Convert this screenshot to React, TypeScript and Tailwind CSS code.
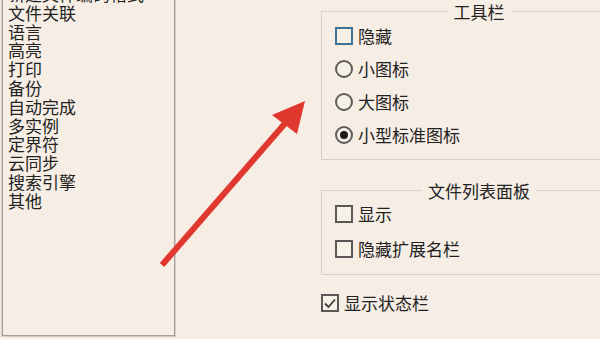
import React from "react";

const font = { fontFamily: '"Noto Sans CJK SC", "Noto Sans", sans-serif' };

const categories = [
  "新建文件编码格式",
  "文件关联",
  "语言",
  "高亮",
  "打印",
  "备份",
  "自动完成",
  "多实例",
  "定界符",
  "云同步",
  "搜索引擎",
  "其他",
];

function CheckBox({ checked = false, focused = false }: { checked?: boolean; focused?: boolean }) {
  return (
    <span
      className={`flex h-[18px] w-[18px] shrink-0 items-center justify-center border-2 ${
        focused ? "border-[#3f7197]" : "border-[#5a5856]"
      } bg-[#f7f0e7]`}
    >
      {checked && (
        <svg width="14" height="14" viewBox="0 0 14 14">
          <path d="M2 7.5 L5.5 11 L12 3.5" fill="none" stroke="#3c3a38" strokeWidth="1.8" />
        </svg>
      )}
    </span>
  );
}

function Radio({ checked = false }: { checked?: boolean }) {
  return (
    <span className="flex h-[18px] w-[18px] shrink-0 items-center justify-center rounded-full border-2 border-[#5e5c5a] bg-[#f7f0e7]">
      {checked && <span className="h-[8px] w-[8px] rounded-full bg-[#1e1c1a]" />}
    </span>
  );
}

function Row({ control, label }: { control: React.ReactNode; label: string }) {
  return (
    <div className="flex h-[24px] items-center gap-[5px]">
      {control}
      <span className="leading-[24px]">{label}</span>
    </div>
  );
}

function Group({ title, children, className = "" }: { title: string; children: React.ReactNode; className?: string }) {
  return (
    <fieldset className={`w-[316px] border border-[#d6d0c7] px-[13px] ${className}`}>
      <legend className="mx-auto px-[6px] leading-[23px]">{title}</legend>
      {children}
    </fieldset>
  );
}

export default function App() {
  return (
    <div
      className="relative flex h-[339px] w-[600px] overflow-hidden bg-[#f6eee5] text-[17px] text-[#222]"
      style={font}
    >
      {/* category list (scrolled, top cut off) */}
      <div className="ml-[1px] mt-[-4px] h-[341px] w-[175px] shrink-0 border border-[#d3cec6]">
        <div className="h-full w-full overflow-hidden border border-[#a3a09b] pl-[5px]">
          <ul className="mt-[-13px] leading-[18.8px]">
            {categories.map((c) => (
              <li key={c} className="whitespace-nowrap">
                {c}
              </li>
            ))}
          </ul>
        </div>
      </div>

      {/* settings */}
      <div className="ml-[145px] flex shrink-0 flex-col">
        <Group title="工具栏" className="pb-[12px]">
          <div className="flex flex-col gap-[9px] pt-[0.5px]">
            <Row control={<CheckBox focused />} label="隐藏" />
            <Row control={<Radio />} label="小图标" />
            <Row control={<Radio />} label="大图标" />
            <Row control={<Radio checked />} label="小型标准图标" />
          </div>
        </Group>
        <Group title="文件列表面板" className="mt-[19.5px] pb-[13px]">
          <div className="flex flex-col gap-[10.5px]">
            <Row control={<CheckBox />} label="显示" />
            <Row control={<CheckBox />} label="隐藏扩展名栏" />
          </div>
        </Group>
        <div className="mt-[16.5px]">
          <Row control={<CheckBox checked />} label="显示状态栏" />
        </div>
      </div>

      {/* red annotation arrow */}
      <svg className="pointer-events-none absolute left-0 top-0" width="600" height="339">
        <line x1="162" y1="265" x2="288" y2="120" stroke="#e0382f" strokeWidth="6" />
        <polygon points="305,101 272,115 297,134" fill="#e0382f" />
      </svg>
    </div>
  );
}
